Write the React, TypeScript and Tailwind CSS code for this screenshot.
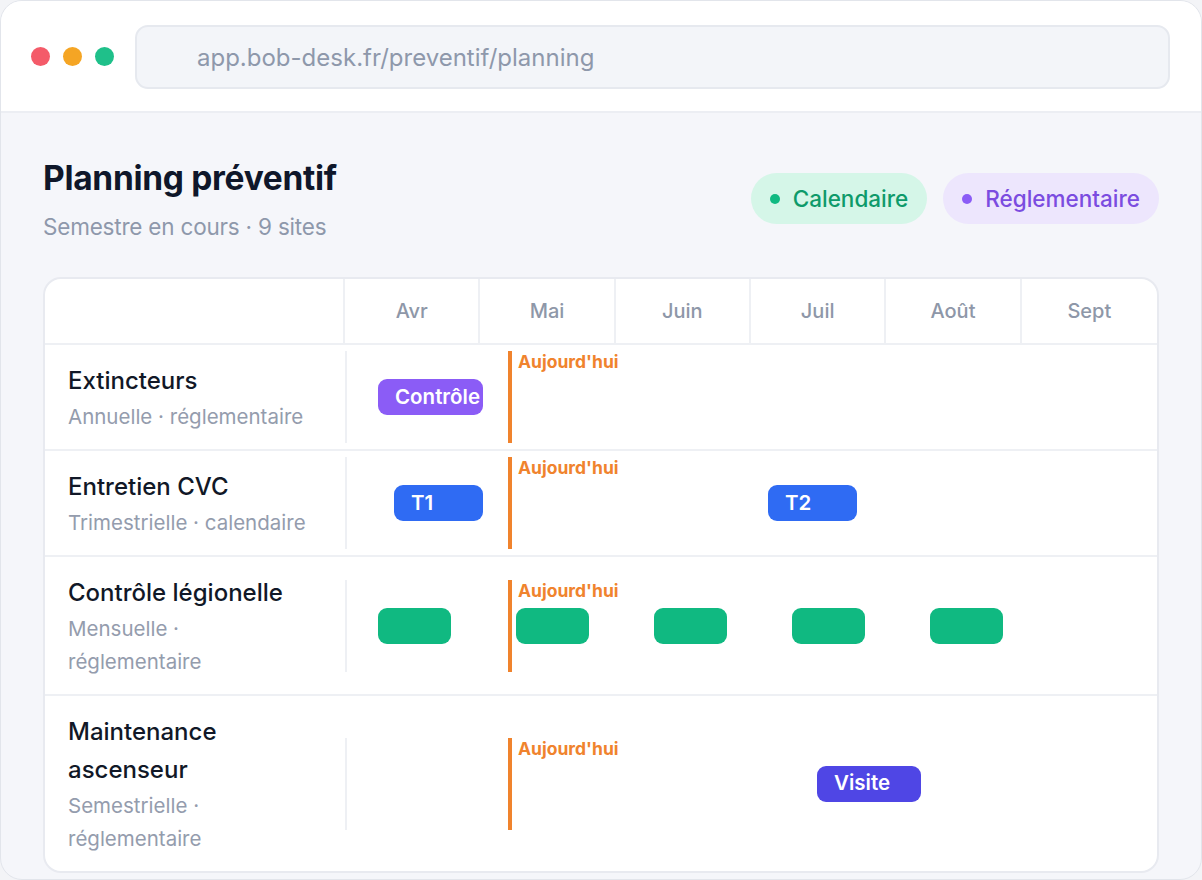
import React from 'react';

type Bar = { left: number; width: number; label?: string; color: string };

type Task = {
  name: string;
  sub: string;
  bars: Bar[];
};

const months = ['Avr', 'Mai', 'Juin', 'Juil', 'Août', 'Sept'];

// positions in px inside the timeline (about 811px wide)
const tasks: Task[] = [
  {
    name: 'Extincteurs',
    sub: 'Annuelle · réglementaire',
    bars: [{ left: 31, width: 105, label: 'Contrôle', color: 'bg-[#8b5cf6]' }],
  },
  {
    name: 'Entretien CVC',
    sub: 'Trimestrielle · calendaire',
    bars: [
      { left: 47, width: 89, label: 'T1', color: 'bg-[#2f6bf3]' },
      { left: 421, width: 89, label: 'T2', color: 'bg-[#2f6bf3]' },
    ],
  },
  {
    name: 'Contrôle légionelle',
    sub: 'Mensuelle · réglementaire',
    bars: [31, 169, 307, 445, 583].map((l) => ({ left: l, width: 73, color: 'bg-[#10b981]' })),
  },
  {
    name: 'Maintenance ascenseur',
    sub: 'Semestrielle · réglementaire',
    bars: [{ left: 470, width: 104, label: 'Visite', color: 'bg-[#4f46e5]' }],
  },
];

function Chip({ label, dot, bg, text }: { label: string; dot: string; bg: string; text: string }) {
  return (
    <div className={`flex items-center gap-[13px] h-[51px] pl-[19px] pr-[19px] rounded-full ${bg}`}>
      <span className={`w-[10px] h-[10px] rounded-full ${dot}`} />
      <span className={`text-[22.5px] font-medium ${text}`}>{label}</span>
    </div>
  );
}

function TaskRow({ task, last }: { task: Task; last: boolean }) {
  return (
    <div className={`flex ${last ? '' : 'border-b-2 border-[#eef0f4]'}`}>
      <div className="w-[300px] shrink-0 pl-[23px] pr-[33px] pt-[17px] pb-[16px]">
        <div className="text-[24px] leading-[38px] font-medium text-[#111827]">{task.name}</div>
        <div className="text-[20.5px] leading-[33px] text-[#949cad]">{task.sub}</div>
      </div>
      <div className="relative flex-1 self-center h-[92px] border-l-2 border-[#eef0f4]">
        <div className="absolute left-[161px] top-0 bottom-0 w-[4px] bg-[#f0832d]" />
        <span className="absolute left-[171px] top-0 text-[17.5px] leading-[22px] font-bold text-[#f0832d]">
          Aujourd'hui
        </span>
        {task.bars.map((b, i) => (
          <div
            key={i}
            className={`absolute top-1/2 -translate-y-1/2 h-[36px] rounded-[9px] flex items-center pl-[17px] text-white text-[20.5px] font-semibold ${b.color}`}
            style={{ left: b.left, width: b.width }}
          >
            {b.label}
          </div>
        ))}
      </div>
    </div>
  );
}

export default function App() {
  return (
    <div
      className="w-[1202px] h-[880px] bg-[#f3f4f7]"
      style={{ fontFamily: 'Inter, "Noto Sans", sans-serif' }}
    >
      <div className="w-full h-full rounded-[22px] border border-[#e2e5eb] overflow-hidden bg-[#f5f6fa] flex flex-col">
        {/* browser bar */}
        <div className="h-[112px] shrink-0 bg-white border-b-2 border-[#eceef3] flex items-center pl-[30px] pr-[31px] gap-[21px]">
          <div className="flex gap-[13px]">
            <span className="w-[19px] h-[19px] rounded-full bg-[#f45b69]" />
            <span className="w-[19px] h-[19px] rounded-full bg-[#f5a524]" />
            <span className="w-[19px] h-[19px] rounded-full bg-[#1fc08a]" />
          </div>
          <div className="flex-1 h-[64px] mt-[1px] rounded-[13px] border-2 border-[#e6e9ef] bg-[#f3f5f9] flex items-center pl-[60px]">
            <span className="mt-[2px] text-[24px] text-[#8e98ab]">app.bob-desk.fr/preventif/planning</span>
          </div>
        </div>

        {/* content */}
        <div className="px-[42px] pt-[45px]">
          <div className="flex items-center justify-between">
            <div>
              <h1 className="text-[33.5px] leading-[40px] font-bold text-[#0f172a] tracking-[-0.3px]">
                Planning préventif
              </h1>
              <p className="mt-[13px] text-[22.5px] leading-[32px] text-[#8e98ab] tracking-[-0.2px]">
                Semestre en cours · 9 sites
              </p>
            </div>
            <div className="flex gap-[16px] mb-[4px]">
              <Chip label="Calendaire" dot="bg-[#10b981]" bg="bg-[#d5f6e8]" text="text-[#0e9a6a]" />
              <Chip label="Réglementaire" dot="bg-[#8b5cf6]" bg="bg-[#ede6fd]" text="text-[#7b4ce0]" />
            </div>
          </div>

          <div className="mt-[34px] bg-white rounded-[18px] border-2 border-[#e8eaf0] overflow-hidden">
            <div className="grid grid-cols-[300px_repeat(6,1fr)] h-[66px] border-b-2 border-[#eef0f4]">
              <div className="border-r-2 border-[#eef0f4]" />
              {months.map((m, i) => (
                <div
                  key={m}
                  className={`flex items-center justify-center text-[20px] font-medium text-[#8e97a8] ${
                    i < months.length - 1 ? 'border-r-2 border-[#eef0f4]' : ''
                  }`}
                >
                  {m}
                </div>
              ))}
            </div>
            {tasks.map((t, i) => (
              <TaskRow key={t.name} task={t} last={i === tasks.length - 1} />
            ))}
          </div>
        </div>
      </div>
    </div>
  );
}
